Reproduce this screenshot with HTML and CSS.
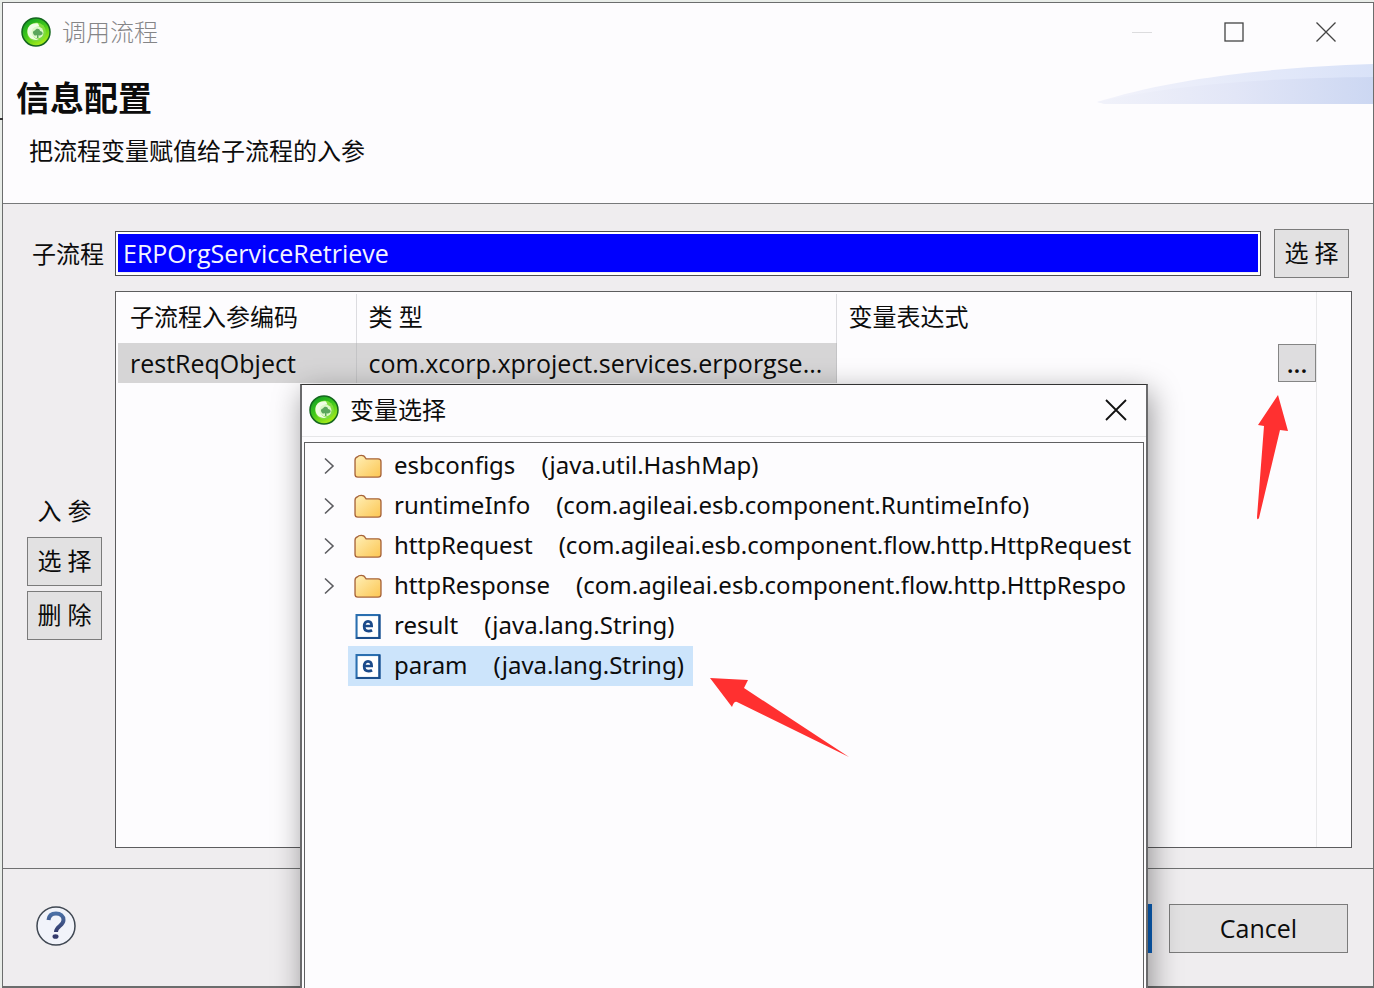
FILE: index.html
```html
<!DOCTYPE html>
<html lang="zh-CN">
<head>
<meta charset="utf-8">
<meta name="viewport" content="width=device-width, initial-scale=1">
<title>调用流程</title>
<link rel="stylesheet" href="styles.css">
</head>
<body>
<svg class="defs" aria-hidden="true">
  <defs>
    <linearGradient id="ring" x1="0.1" y1="0" x2="0.7" y2="1">
      <stop offset="0" stop-color="#0b9a22"/>
      <stop offset="0.5" stop-color="#3fc81c"/>
      <stop offset="1" stop-color="#b4f01a"/>
    </linearGradient>
    <linearGradient id="folderFill" x1="0" y1="0" x2="1" y2="1">
      <stop offset="0" stop-color="#fff0b8"/>
      <stop offset="1" stop-color="#fcc652"/>
    </linearGradient>
    <linearGradient id="sweepBack" x1="0" y1="0" x2="1" y2="0">
      <stop offset="0" stop-color="#f3f3fb"/>
      <stop offset="1" stop-color="#d9e2f8"/>
    </linearGradient>
    <linearGradient id="sweepFront" x1="0" y1="0" x2="1" y2="0">
      <stop offset="0" stop-color="#f1f2fa"/>
      <stop offset="0.5" stop-color="#e2e6f7"/>
      <stop offset="1" stop-color="#ccd7f2"/>
    </linearGradient>
    <linearGradient id="markFill" x1="0" y1="0" x2="0" y2="1">
      <stop offset="0" stop-color="#4a6fa5"/>
      <stop offset="1" stop-color="#343a6c"/>
    </linearGradient>
    <symbol id="logo" viewBox="0 0 30 30">
      <circle cx="15" cy="15" r="14" fill="url(#ring)" stroke="#14661f" stroke-width="1.500"/>
      <circle cx="15.500" cy="15" r="9.500" fill="#7fdc3c"/>
      <path d="M17 6.500C10 5.500 6 10 6.500 15.500 7 21 12 24 18 22.500c-3-.5-6-2-6.500-5.500-.5-4 2-7.500 7-7.500z" fill="#effde4"/>
      <circle cx="16.500" cy="15.500" r="6" fill="#dcf8c8"/>
      <path d="M12.500 17c-1.500-2 .5-3.500 1.500-3.500 1-2.500 5-2 5 .5 3 0 3.500 4 1 4-1 .8-2 .8-2.500 0v3h-1.500v-3c-1 1-3 .8-3.500-1z" fill="#5aa65c"/>
    </symbol>
    <symbol id="folder" viewBox="0 0 30 26">
      <path d="M1.500 21V6.500c0-2 1-3 2.500-3.500 1-1.300 2-1.500 4-1.500s3.300.5 4 2l1 1.500h12.500c2 0 3 1 3 3V21c0 2-1 3-3 3h-21c-2 0-3-1-3-3z" fill="url(#folderFill)" stroke="#a8643a" stroke-width="1.400"/>
    </symbol>
    <symbol id="element" viewBox="0 0 24 24">
      <rect x="1" y="1" width="22" height="22" fill="#fff" stroke="#2a6fb0" stroke-width="2"/>
      <path d="M1 23h22V1" fill="none" stroke="#1c4f8c" stroke-width="2"/>
      <path d="M8.500 11.500h7c0-3-1.400-4.500-3.500-4.500s-3.700 1.700-3.700 4.800c0 3.200 1.600 4.700 4.200 4.700 1.300 0 2.400-.3 3.400-.9" fill="none" stroke="#1b4a8a" stroke-width="2.600"/>
    </symbol>
    <symbol id="chevron" viewBox="0 0 12 18">
      <path d="M2 1.500l8 7.500-8 7.500" fill="none" stroke="#5c5c60" stroke-width="1.600"/>
    </symbol>
  </defs>
</svg>

<main class="window">
  <header class="banner">
    <div class="titlebar">
      <svg class="logo"><use href="#logo"/></svg>
      <span class="window-title">调用流程</span>
      <div class="window-controls">
        <button class="control" aria-label="最小化" disabled><svg width="20" height="20"><path d="M0 10.500h20" stroke="#dcdcde"/></svg></button>
        <button class="control" aria-label="最大化"><svg width="20" height="20"><rect x="1" y="1" width="18" height="18" fill="none" stroke="#444" stroke-width="1.300"/></svg></button>
        <button class="control" aria-label="关闭"><svg width="20" height="20"><path d="M.5.500l19 19M19.500.500l-19 19" stroke="#444" stroke-width="1.300"/></svg></button>
      </div>
    </div>
    <svg class="sweep" viewBox="0 0 276 40" aria-hidden="true">
      <path d="M0 38C70 16 160 4 276 0v40H8z" fill="url(#sweepBack)"/>
      <path d="M0 38C70 22 160 14 276 13v27H8z" fill="url(#sweepFront)"/>
    </svg>
    <h1 class="heading">信息配置</h1>
    <p class="subheading">把流程变量赋值给子流程的入参</p>
  </header>

  <section class="content">
    <label class="field-label" for="flow">子流程</label>
    <div class="flow-row">
      <input class="flow-input" id="flow" type="text" value="ERPOrgServiceRetrieve">
      <button class="button">选 择</button>
    </div>
    <div class="side">
      <span>入 参</span>
      <button class="button">选 择</button>
      <button class="button">删 除</button>
    </div>
    <div class="grid-box">
      <table class="params">
        <colgroup><col class="col-code"><col class="col-type"><col></colgroup>
        <thead>
          <tr><th>子流程入参编码</th><th>类 型</th><th>变量表达式</th></tr>
        </thead>
        <tbody>
          <tr>
            <td class="picked">restReqObject</td>
            <td class="picked">com.xcorp.xproject.services.erporgse...</td>
            <td class="expression"><button class="more" aria-label="选择变量">...</button></td>
          </tr>
        </tbody>
      </table>
      <div class="gutter"></div>
    </div>
  </section>

  <footer class="footer">
    <button class="help" aria-label="帮助">
      <svg width="40" height="40" viewBox="0 0 40 40">
        <circle cx="20" cy="20" r="19" fill="#f1f3fa" stroke="#3f4752" stroke-width="1.500"/>
        <path d="M12.500 14c.5-5 4-6.500 7.500-6.500 4.500 0 7.500 2.500 7.500 6.500 0 6-7.500 6-7.500 12" fill="none" stroke="url(#markFill)" stroke-width="4"/>
        <ellipse cx="19.500" cy="30.500" rx="3" ry="2.300" fill="#343a6c"/>
      </svg>
    </button>
    <button class="button wide primary" aria-label="OK"></button>
    <button class="button wide">Cancel</button>
  </footer>
</main>

<section class="picker" role="dialog" aria-labelledby="picker-title">
  <header class="picker-bar">
    <svg class="logo"><use href="#logo"/></svg>
    <h2 class="picker-title" id="picker-title">变量选择</h2>
    <button class="control" aria-label="关闭"><svg width="22" height="22"><path d="M1 1l20 20M21 1l-20 20" stroke="#111" stroke-width="1.800"/></svg></button>
  </header>
  <ul class="tree">
    <li class="node"><button class="toggle" aria-label="展开"><svg width="12" height="18"><use href="#chevron"/></svg></button><a class="item" href="#"><svg class="icon"><use href="#folder"/></svg><span>esbconfigs</span><span>(java.util.HashMap)</span></a></li>
    <li class="node"><button class="toggle" aria-label="展开"><svg width="12" height="18"><use href="#chevron"/></svg></button><a class="item" href="#"><svg class="icon"><use href="#folder"/></svg><span>runtimeInfo</span><span>(com.agileai.esb.component.RuntimeInfo)</span></a></li>
    <li class="node"><button class="toggle" aria-label="展开"><svg width="12" height="18"><use href="#chevron"/></svg></button><a class="item" href="#"><svg class="icon"><use href="#folder"/></svg><span>httpRequest</span><span>(com.agileai.esb.component.flow.http.HttpRequest</span></a></li>
    <li class="node"><button class="toggle" aria-label="展开"><svg width="12" height="18"><use href="#chevron"/></svg></button><a class="item" href="#"><svg class="icon"><use href="#folder"/></svg><span>httpResponse</span><span>(com.agileai.esb.component.flow.http.HttpRespo</span></a></li>
    <li class="node leaf"><a class="item" href="#"><svg class="icon"><use href="#element"/></svg><span>result</span><span>(java.lang.String)</span></a></li>
    <li class="node leaf"><a class="item selected" href="#"><svg class="icon"><use href="#element"/></svg><span>param</span><span>(java.lang.String)</span></a></li>
  </ul>
</section>

<svg class="arrow arrow-up" width="34" height="126" aria-hidden="true"><path d="M22 0l10 36-8-1L3 123q-2 3-2-1L8 31l-6-1z"/></svg>
<svg class="arrow arrow-left" width="142" height="82" aria-hidden="true"><path d="M0 0l38 2-4 8 105 69-112-55q-3-1-5 5z"/></svg>
</body>
</html>
```

FILE: styles.css
```css
* { box-sizing: border-box; }

body {
  margin: 0;
  height: 100vh;
  padding: 2px 0 0 2px;
  overflow: hidden;
  position: relative;
  background: #e9ede9;
  color: #0c0c0c;
  font: 24px/32px "Open Sans", "Noto Sans CJK SC", sans-serif;
}

body::before {
  content: "";
  position: absolute;
  left: 0;
  top: 118px;
  width: 3px;
  height: 2px;
  background: #333;
}

button, input { font: inherit; color: inherit; }
button { padding: 0; }
h1, h2, p, ul { margin: 0; padding: 0; }
.defs { position: absolute; width: 0; height: 0; }

.window {
  display: flex;
  flex-direction: column;
  height: 100%;
  border: 1px solid #6b6d6d;
  border-bottom-width: 2px;
  background: #efedef;
}

.banner {
  position: relative;
  height: 201px;
  border-bottom: 1px solid #77797a;
  background: #fdfcfe;
}

.titlebar {
  display: flex;
  align-items: center;
  height: 58px;
  padding-left: 18px;
}

.logo { width: 30px; height: 30px; }
.window-title { margin-left: 11px; color: #858587; font-weight: 300; }
.window-controls { display: flex; margin-left: auto; padding-right: 1px; }

.control {
  display: grid;
  place-items: center;
  width: 92px;
  height: 56px;
  border: 0;
  background: none;
}

.sweep {
  position: absolute;
  right: 0;
  top: 61px;
  width: 276px;
  height: 40px;
}

.heading {
  padding: 13px 0 0 13px;
  font-size: 34px;
  line-height: 48px;
  font-weight: 700;
}

.subheading { padding: 13px 0 0 26px; }

.content {
  flex: 1;
  display: grid;
  grid-template-columns: 75px 1fr;
  grid-template-rows: 49px 1fr;
  gap: 13px 13px;
  padding: 25px 21px 20px 24px;
  border-bottom: 1px solid #6f7071;
}

.field-label { padding-left: 5px; align-self: center; white-space: nowrap; }
.flow-row { display: flex; align-items: center; gap: 13px; padding-right: 3px; }

.flow-input {
  flex: 1;
  min-width: 0;
  height: 45px;
  padding: 2px 2px 3px;
  border: 1px solid #4f4f4f;
  background: #0000fe content-box;
  box-shadow: inset 0 0 0 2px #fff;
  color: #f4f4ff;
  font-size: 25px;
  text-indent: 5px;
  border-radius: 0;
  outline: 0;
}

.button {
  width: 75px;
  height: 49px;
  padding-bottom: 2px;
  border: 1px solid #7b7b7b;
  background: #e2e1e2;
}

.side {
  display: flex;
  flex-direction: column;
  align-items: center;
  gap: 5px;
  padding-top: 204px;
}
.side span { margin-bottom: 5px; }

.grid-box {
  display: flex;
  padding: 2px 0 0 2px;
  border: 1px solid #5c5c5e;
  background: #fdfcfe;
}

.params {
  flex: 1;
  align-self: flex-start;
  table-layout: fixed;
  border-collapse: collapse;
}
.col-code { width: 238px; }
.col-type { width: 480px; }

.params th, .params td {
  padding: 0 0 0 12px;
  border-right: 1px solid #dcdce0;
  text-align: left;
  font-weight: 400;
  white-space: nowrap;
}
.params th { height: 49px; padding-bottom: 3px; }
.params td { height: 40px; font-size: 25px; }
.params th:last-child, .params td:last-child { border-right: 0; }
.params .picked { background: #d6d5d6; border-color: #c4c4c6; }
.params .expression { text-align: right; }

.more {
  display: block;
  width: 38px;
  height: 38px;
  margin-left: auto;
  border: 1px solid #858585;
  background: #dedddf;
  font-weight: 600;
}

.gutter { width: 35px; margin-top: -2px; border-left: 1px solid #e8e8ea; }

.footer {
  display: flex;
  align-items: center;
  gap: 17px;
  height: 117px;
  padding: 2px 25px 0 33px;
}
.help { width: 40px; height: 46px; margin-right: auto; border: 0; background: none; }
.help svg { display: block; margin-bottom: 6px; }
.wide { width: 179px; font-size: 25px; }
.primary { border: 4px solid #0a62be; }

.picker {
  position: absolute;
  left: 300px;
  right: 226px;
  top: 384px;
  bottom: -40px;
  display: flex;
  flex-direction: column;
  border: 2px solid #6a6a6c;
  border-top: 1px solid #333;
  background: #fdfcfe;
  box-shadow: 3px 8px 28px rgba(0, 0, 0, 0.4);
}

.picker-bar {
  display: flex;
  align-items: center;
  height: 52px;
  padding: 0 0 2px 7px;
  border-bottom: 1px solid #e6e6e8;
}
.picker-title { margin: 0 auto 0 11px; font-size: 24px; line-height: 32px; font-weight: 400; }
.picker-bar .control { width: 60px; height: 50px; }

.tree {
  flex: 1;
  margin: 5px 2px 0;
  padding: 3px 0 0 12px;
  overflow: hidden;
  list-style: none;
  border: 1px solid #606062;
  font-family: "Noto Sans", "Noto Sans CJK SC", sans-serif;
}

.node { display: flex; align-items: center; height: 40px; padding-left: 6px; }
.toggle { display: grid; width: 12px; border: 0; background: none; }
.toggle + .item { margin-left: 13px; }
.leaf .item { margin-left: 25px; }

.item {
  display: flex;
  align-items: center;
  height: 40px;
  padding: 0 9px 0 5px;
  color: inherit;
  text-decoration: none;
  white-space: nowrap;
}
.item span { padding-bottom: 2px; }
.item span + span { margin-left: 26px; }
.selected { background: #cce4fb; }
.icon { flex: none; width: 30px; height: 25px; margin-right: 11px; }

.arrow { position: absolute; fill: #ff3030; overflow: visible; }
.arrow-up { left: 1256px; top: 395px; }
.arrow-left { left: 710px; top: 678px; }
```
